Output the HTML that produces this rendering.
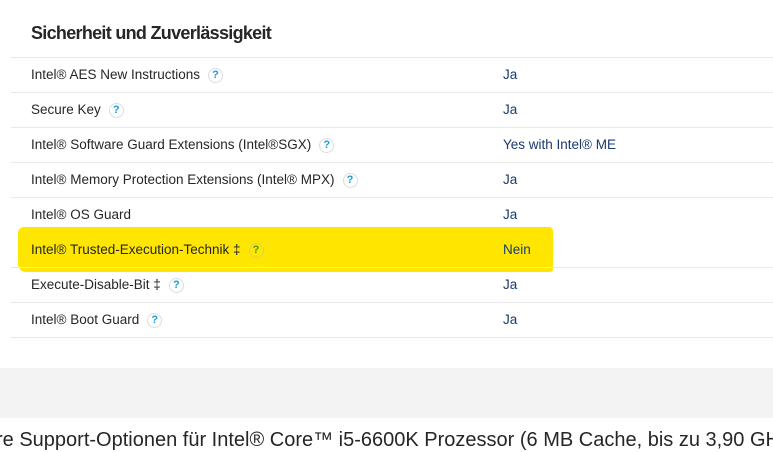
<!DOCTYPE html>
<html><head><meta charset="utf-8"><style>
*{margin:0;padding:0;box-sizing:border-box}
body{width:773px;height:448px;overflow:hidden;background:#fff;font-family:"Liberation Sans",sans-serif;position:relative}
h2{position:absolute;left:31px;top:23px;font-size:18px;font-weight:bold;color:#262626;letter-spacing:-0.7px}
.row{position:absolute;left:11px;width:762px;height:35px;border-top:1px solid #e9e9e9}
.row .l{position:absolute;left:20px;top:9px;font-size:13.5px;color:#262626}
.row .v{position:absolute;left:492px;top:9px;font-size:13.5px;color:#183b6d}
.q{display:inline-block;width:15px;height:15px;border:1px solid #d8dde3;border-radius:50%;font-size:11px;font-weight:bold;color:#1a9cd6;text-align:center;line-height:13px;margin-left:8px;vertical-align:1px}
.hl{position:absolute;left:18px;top:227px;width:535px;height:45px;background:#ffe600;border-radius:6px 4px 3px 8px}
.gray{position:absolute;left:0;top:368px;width:773px;height:50px;background:#f3f3f3}
.bot{position:absolute;left:-4px;top:429px;font-size:20px;color:#262626;white-space:nowrap}
</style></head><body>
<h2>Sicherheit und Zuverlässigkeit</h2>
<div class="hl"></div>
<div class="row" style="top:57px"><span class="l">Intel® AES New Instructions<span class="q">?</span></span><span class="v">Ja</span></div>
<div class="row" style="top:92px"><span class="l">Secure Key<span class="q">?</span></span><span class="v">Ja</span></div>
<div class="row" style="top:127px"><span class="l">Intel® Software Guard Extensions (Intel®SGX)<span class="q">?</span></span><span class="v">Yes with Intel® ME</span></div>
<div class="row" style="top:162px"><span class="l">Intel® Memory Protection Extensions (Intel® MPX)<span class="q">?</span></span><span class="v">Ja</span></div>
<div class="row" style="top:197px"><span class="l">Intel® OS Guard</span><span class="v">Ja</span></div>
<div class="row" style="top:232px;border-top-color:transparent"><span class="l">Intel® Trusted-Execution-Technik ‡<span class="q" style="color:#4a9a1a;border-color:#d8d070">?</span></span><span class="v">Nein</span></div>
<div class="row" style="top:267px"><span class="l">Execute-Disable-Bit ‡<span class="q">?</span></span><span class="v">Ja</span></div>
<div class="row" style="top:302px"><span class="l">Intel® Boot Guard<span class="q">?</span></span><span class="v">Ja</span></div>
<div class="row" style="top:337px"></div>
<div class="gray"></div>
<div class="bot">re Support-Optionen für Intel® Core™ i5-6600K Prozessor (6 MB Cache, bis zu 3,90 GHz)</div>
</body></html>
